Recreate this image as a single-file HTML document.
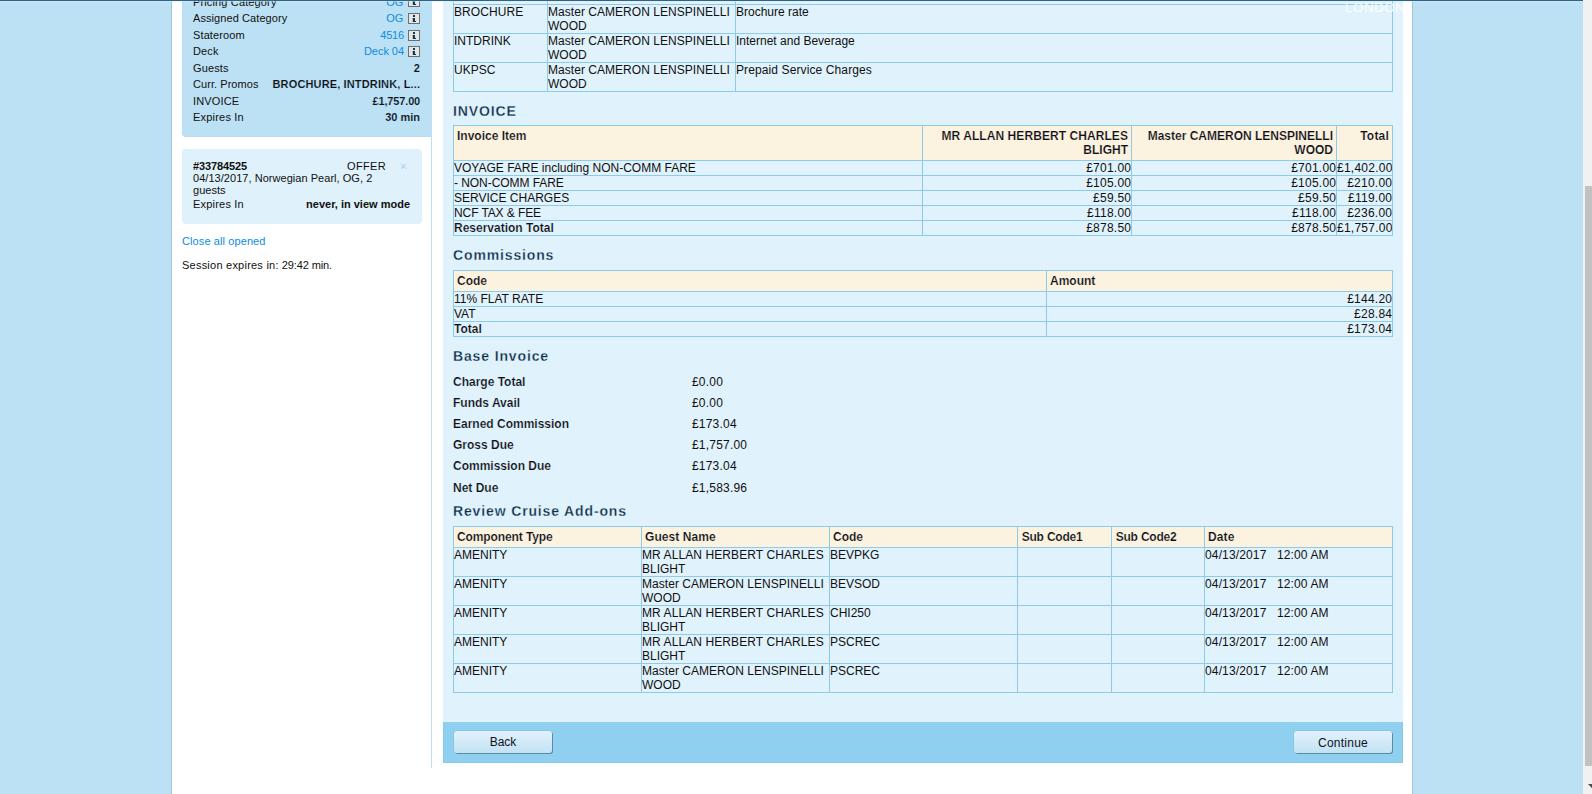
<!DOCTYPE html>
<html><head><meta charset="utf-8"><title>Review</title>
<style>
*{box-sizing:border-box}
html,body{margin:0;padding:0}
body{width:1592px;height:794px;overflow:hidden;position:relative;background:#bce1f4;font-family:"Liberation Sans",sans-serif;font-size:12px;line-height:14px;color:#101010}
.abs{position:absolute}
#wrap{left:172px;top:0;width:1240px;height:794px;background:#fff;box-shadow:0 0 0 1px rgba(0,0,0,.115)}
#topbar{left:0;top:0;width:1583px;height:1px;background:#2f6380}
#topbar2{left:0;top:1px;width:1583px;height:1px;background:rgba(210,240,255,.45)}
#vline{left:431px;top:0;width:1px;height:768px;background:#bfe0f3}
#panel{left:443px;top:0;width:960px;height:722px;background:#e0f2fc}
#footer{left:443px;top:722px;width:960px;height:41px;background:#8fcfef;border:1px solid #88cbed;border-top:0}
.btn{position:absolute;top:731px;width:98px;height:22px;border-radius:3px;background:linear-gradient(#e3f2fb,#c2e2f5);font-size:12px;line-height:22px;text-align:center;color:#10101c;box-shadow:1px 1px 0 #5f89a3,0 0 0 .5px rgba(120,170,200,.55)}
#sb{left:1583px;top:0;width:9px;height:794px;background:#f1f1f1}
#sbt{left:1585px;top:186px;width:7px;height:580px;background:#c1c1c1}
table{border-collapse:collapse;table-layout:fixed;position:absolute;left:453px}
td,th{border:1px solid #8ecbeb;padding:0;vertical-align:top;text-align:left;font-weight:normal;overflow:hidden;white-space:nowrap}
th{background:#fcf2e0;font-weight:bold;padding:3px}
.r{text-align:right}
td.r{letter-spacing:.24px}
td.r::after{content:"";margin-left:-.24px}

h3{position:absolute;left:453px;margin:0;font-size:14px;line-height:16px;font-weight:bold;letter-spacing:.86px;color:#0b2c48;-webkit-text-stroke:.27px #e0f2fc;white-space:nowrap}
.b,b,th{font-weight:bold;color:#0c0e14}
.kv b,td.b{-webkit-text-stroke:.18px #e0f2fc}
th{-webkit-text-stroke:.18px #fcf2e0}
.srow .b{-webkit-text-stroke:.15px #bce1f4}

.kv{left:453px;font-size:12px;line-height:14px}
.kv span{position:absolute;left:239px;top:0;white-space:nowrap;letter-spacing:.2px}
.kv b{white-space:nowrap}
#london{left:1345px;top:0;width:58px;overflow:hidden;color:#fff;font-size:13.5px;line-height:16px;letter-spacing:.45px;opacity:.92;white-space:nowrap}
#card1{left:182px;top:0;width:249px;height:137px;background:#bce1f4;border-radius:0 0 0 4px;border-left:1px solid #b8def2;border-bottom:1px solid #b6dcf1}
#card2{left:182px;top:149px;width:240px;height:75px;background:#dff1fb;border-radius:4px}
.srow{left:193px;width:227px;font-size:11px;line-height:14px;white-space:nowrap;letter-spacing:.12px}
.srow .v{position:absolute;right:-.12px;top:0}
.srow a{color:#0d8ce0;margin-right:16.8px;letter-spacing:0}
.s{font-size:11px;line-height:14px;white-space:nowrap;letter-spacing:.1px}
</style></head><body>
<div id="wrap" class="abs"></div>
<div id="vline" class="abs"></div>
<div id="panel" class="abs"></div>
<div id="footer" class="abs"></div>
<div class="btn" style="left:454px">Back</div>
<div class="btn" style="left:1294px;letter-spacing:.25px;padding-top:.6px">Continue</div>
<!--SIDEBAR-->
<div class="abs" id="card1"></div>
<div class="abs srow" style="top:-5px"><span style="letter-spacing:.14px">Pricing Category</span><span class="v"><a>OG</a></span></div>
<div class="abs srow" style="top:11px"><span style="letter-spacing:.08px">Assigned Category</span><span class="v"><a>OG</a></span></div>
<div class="abs srow" style="top:28px"><span>Stateroom</span><span class="v"><a style="letter-spacing:-.22px;margin-right:16.2px">4516</a></span></div>
<div class="abs srow" style="top:44px"><span>Deck</span><span class="v"><a style="letter-spacing:-.04px;margin-right:16.1px">Deck 04</a></span></div>
<div class="abs srow" style="top:61px"><span>Guests</span><span class="v b">2</span></div>
<div class="abs srow" style="top:77px"><span style="letter-spacing:.06px">Curr. Promos</span><span class="v b" style="letter-spacing:.14px">BROCHURE, INTDRINK, L...</span></div>
<div class="abs srow" style="top:94px"><span style="letter-spacing:.16px">INVOICE</span><span class="v b" style="letter-spacing:-.15px;right:-.1px">£1,757.00</span></div>
<div class="abs srow" style="top:110px"><span style="letter-spacing:.2px">Expires In</span><span class="v b" style="letter-spacing:0;right:0">30 min</span></div>
<svg class="abs" style="left:408px;top:-4px" width="12" height="11" viewBox="0 0 12 11"><rect x=".5" y=".5" width="11" height="10" fill="#e6e6e6" stroke="#6f6f6f"/><path d="M5 2h2v2h-2zM4.6 5h2.4v3h1v1h-3.2v-3.2h-.2z" fill="#103a48"/></svg><svg class="abs" style="left:408px;top:13px" width="12" height="11" viewBox="0 0 12 11"><rect x=".5" y=".5" width="11" height="10" fill="#e6e6e6" stroke="#6f6f6f"/><path d="M5 2h2v2h-2zM4.6 5h2.4v3h1v1h-3.2v-3.2h-.2z" fill="#103a48"/></svg><svg class="abs" style="left:408px;top:30px" width="12" height="11" viewBox="0 0 12 11"><rect x=".5" y=".5" width="11" height="10" fill="#e6e6e6" stroke="#6f6f6f"/><path d="M5 2h2v2h-2zM4.6 5h2.4v3h1v1h-3.2v-3.2h-.2z" fill="#103a48"/></svg><svg class="abs" style="left:408px;top:46px" width="12" height="11" viewBox="0 0 12 11"><rect x=".5" y=".5" width="11" height="10" fill="#e6e6e6" stroke="#6f6f6f"/><path d="M5 2h2v2h-2zM4.6 5h2.4v3h1v1h-3.2v-3.2h-.2z" fill="#103a48"/></svg>
<div class="abs" id="card2"></div>
<div class="abs s" style="left:193px;top:159px;font-weight:bold;letter-spacing:-.12px">#33784525</div>
<div class="abs s" style="left:347px;top:159px;letter-spacing:.36px">OFFER</div>
<div class="abs" style="left:400.3px;top:158.5px;font-size:10.5px;line-height:14px;color:#b3daf2;font-weight:bold">×</div>
<div class="abs s" style="left:193px;top:172px;line-height:12px;letter-spacing:.04px">04/13/2017, Norwegian Pearl, OG, 2<br>guests</div>
<div class="abs s" style="left:193px;top:197px;letter-spacing:.2px">Expires In</div>
<div class="abs s" style="left:250px;top:197px;width:160px;text-align:right;font-weight:bold;letter-spacing:0">never, in view mode</div>
<div class="abs s" style="left:182px;top:234px;color:#0d8ce0">Close all opened</div>
<div class="abs s" style="left:182px;top:258px"><span style="letter-spacing:.23px">Session expires in:</span><span style="letter-spacing:-.1px"> 29:42 min.</span></div>
<!--/SIDEBAR-->
<!--MAIN-->
<table style="top:-25px;width:939px">
<colgroup><col style="width:94px"><col style="width:188px"><col style="width:657px"></colgroup>
<tr style="height:29px"><td>&nbsp;</td><td>&nbsp;</td><td>&nbsp;</td></tr>
<tr style="height:29px"><td style="letter-spacing:.1px">BROCHURE</td><td><span style="letter-spacing:.04px">Master CAMERON LENSPINELLI</span><br>WOOD</td><td>Brochure rate</td></tr>
<tr style="height:29px"><td>INTDRINK</td><td><span style="letter-spacing:.04px">Master CAMERON LENSPINELLI</span><br>WOOD</td><td>Internet and Beverage</td></tr>
<tr style="height:29px"><td>UKPSC</td><td><span style="letter-spacing:.04px">Master CAMERON LENSPINELLI</span><br>WOOD</td><td style="letter-spacing:.11px">Prepaid Service Charges</td></tr>
</table>
<h3 style="top:103px">INVOICE</h3>
<table style="top:125px;width:939px">
<colgroup><col style="width:469px"><col style="width:209px"><col style="width:205px"><col style="width:56px"></colgroup>
<tr style="height:35px"><th>Invoice Item</th><th class="r"><span style="letter-spacing:.07px">MR ALLAN HERBERT CHARLES</span><br>BLIGHT</th><th class="r">Master CAMERON LENSPINELLI<br>WOOD</th><th class="r" style="letter-spacing:.2px">Total</th></tr>
<tr style="height:15px"><td>VOYAGE FARE including NON-COMM FARE</td><td class="r">£701.00</td><td class="r">£701.00</td><td class="r">£1,402.00</td></tr>
<tr style="height:15px"><td style="letter-spacing:-.06px">- NON-COMM FARE</td><td class="r">£105.00</td><td class="r">£105.00</td><td class="r">£210.00</td></tr>
<tr style="height:15px"><td>SERVICE CHARGES</td><td class="r">£59.50</td><td class="r">£59.50</td><td class="r">£119.00</td></tr>
<tr style="height:15px"><td style="letter-spacing:-.1px">NCF TAX &amp; FEE</td><td class="r">£118.00</td><td class="r">£118.00</td><td class="r">£236.00</td></tr>
<tr style="height:15px"><td class="b">Reservation Total</td><td class="r">£878.50</td><td class="r">£878.50</td><td class="r">£1,757.00</td></tr>
</table>
<h3 style="top:247px">Commissions</h3>
<table style="top:270px;width:939px">
<colgroup><col style="width:593px"><col style="width:346px"></colgroup>
<tr style="height:21px"><th>Code</th><th>Amount</th></tr>
<tr style="height:15px"><td>11% FLAT RATE</td><td class="r">£144.20</td></tr>
<tr style="height:15px"><td>VAT</td><td class="r">£28.84</td></tr>
<tr style="height:15px"><td class="b">Total</td><td class="r">£173.04</td></tr>
</table>
<h3 style="top:348px">Base Invoice</h3>
<div class="abs kv" style="top:375px"><b>Charge Total</b><span>£0.00</span></div>
<div class="abs kv" style="top:396px"><b>Funds Avail</b><span>£0.00</span></div>
<div class="abs kv" style="top:417px"><b>Earned Commission</b><span>£173.04</span></div>
<div class="abs kv" style="top:438px"><b>Gross Due</b><span>£1,757.00</span></div>
<div class="abs kv" style="top:459px"><b>Commission Due</b><span>£173.04</span></div>
<div class="abs kv" style="top:481px"><b>Net Due</b><span>£1,583.96</span></div>
<h3 style="top:503px">Review Cruise Add-ons</h3>
<table style="top:526px;width:939px">
<colgroup><col style="width:188px"><col style="width:188px"><col style="width:188px"><col style="width:94px"><col style="width:93px"><col style="width:188px"></colgroup>
<tr style="height:21px"><th style="letter-spacing:-.11px">Component Type</th><th style="letter-spacing:.06px">Guest Name</th><th>Code</th><th style="letter-spacing:-.2px;padding-left:3.7px">Sub Code1</th><th style="letter-spacing:-.2px;padding-left:3.7px">Sub Code2</th><th style="letter-spacing:.1px">Date</th></tr>
<tr style="height:29px"><td>AMENITY</td><td><span style="letter-spacing:.09px">MR ALLAN HERBERT CHARLES</span><br>BLIGHT</td><td>BEVPKG</td><td></td><td></td><td><span style="letter-spacing:.14px">04/13/2017 &nbsp; 12:00 AM</span></td></tr>
<tr style="height:29px"><td>AMENITY</td><td><span style="letter-spacing:.04px">Master CAMERON LENSPINELLI</span><br>WOOD</td><td>BEVSOD</td><td></td><td></td><td><span style="letter-spacing:.14px">04/13/2017 &nbsp; 12:00 AM</span></td></tr>
<tr style="height:29px"><td>AMENITY</td><td><span style="letter-spacing:.09px">MR ALLAN HERBERT CHARLES</span><br>BLIGHT</td><td>CHI250</td><td></td><td></td><td><span style="letter-spacing:.14px">04/13/2017 &nbsp; 12:00 AM</span></td></tr>
<tr style="height:29px"><td>AMENITY</td><td><span style="letter-spacing:.09px">MR ALLAN HERBERT CHARLES</span><br>BLIGHT</td><td>PSCREC</td><td></td><td></td><td><span style="letter-spacing:.14px">04/13/2017 &nbsp; 12:00 AM</span></td></tr>
<tr style="height:29px"><td>AMENITY</td><td><span style="letter-spacing:.04px">Master CAMERON LENSPINELLI</span><br>WOOD</td><td>PSCREC</td><td></td><td></td><td><span style="letter-spacing:.14px">04/13/2017 &nbsp; 12:00 AM</span></td></tr>
</table>
<div class="abs" id="london">LONDON</div>
<!--/MAIN-->
<div id="topbar" class="abs"></div><div id="topbar2" class="abs"></div>
<div id="sb" class="abs"></div><div id="sbt" class="abs"></div>
<svg class="abs" style="left:1583px;top:780px" width="9" height="12" viewBox="0 0 9 12"><path d="M5 4h4v4.2z" fill="#505050"/></svg>
</body></html>
